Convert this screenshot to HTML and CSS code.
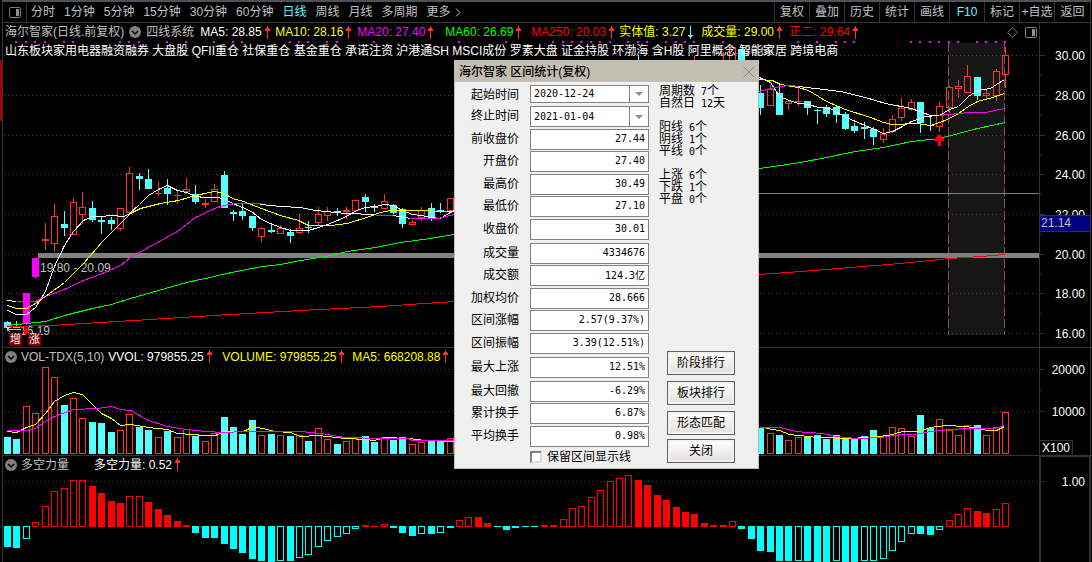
FILE: index.html
```html
<!DOCTYPE html>
<html lang="zh-CN">
<head>
<meta charset="utf-8">
<title>海尔智家 区间统计</title>
<link rel="stylesheet" href="styles.css">
</head>
<body>
<svg class="defs" aria-hidden="true">
  <symbol id="up" viewBox="0 0 7 13"><path d="M3 0H4V2H5V3H6V5H4V13H3V5H1V3H2V2H3Z"/></symbol>
  <symbol id="down" viewBox="0 0 7 13"><path d="M3 0H4V9H6V10H5V11H4V13H3V11H2V10H1V9H3Z"/></symbol>
  <symbol id="fold" viewBox="0 0 12 12"><circle cx="6" cy="6" r="6" fill="#808080"/><path d="M3 5L6 8L9 5" fill="none" stroke="#000" stroke-width="1.5"/></symbol>
  <symbol id="pane" viewBox="0 0 12 11"><rect x=".5" y=".5" width="11" height="10" rx="1" fill="none" stroke="#808080"/><rect x="7" y="2" width="3" height="7" fill="#909090"/></symbol>
</svg>
<div class="app">
  <nav class="toolbar">
    <button class="pane-btn" aria-label="侧栏"><svg class="pane"><use href="#pane"/></svg></button>
    <div class="periods">
      <button>分时</button><button>1分钟</button><button>5分钟</button><button>15分钟</button><button>30分钟</button><button>60分钟</button><button class="active">日线</button><button>周线</button><button>月线</button><button>多周期</button><button class="more">更多<svg class="chev" viewBox="0 0 6 9"><path d="M1 0.5L5 4.5L1 8.5"/></svg></button>
    </div>
    <div class="tools">
      <button>复权</button><button>叠加</button><button>历史</button><button>统计</button><button>画线</button><button class="active">F10</button><button>标记</button><button>+自选</button><button>返回</button>
    </div>
  </nav>

  <section class="panel">
    <svg class="plot" id="price" viewBox="3 23 1036 324" preserveAspectRatio="none"></svg>
    <div class="overlay">
      <div class="legend">
        <span class="name">海尔智家(日线.前复权)</span><svg class="fold"><use href="#fold"/></svg><span class="name">四线系统</span>
        <div class="averages">
          <span class="white">MA5: 28.85<svg class="arrow"><use href="#up"/></svg></span>
          <span class="yellow">MA10: 28.16<svg class="arrow"><use href="#up"/></svg></span>
          <span class="magenta">MA20: 27.40<svg class="arrow"><use href="#up"/></svg></span>
          <span class="green">MA60: 26.69<svg class="arrow"><use href="#up"/></svg></span>
          <span class="red">MA250: 20.03<svg class="arrow"><use href="#up"/></svg></span>
          <span class="yellow">实体值: 3.27<svg class="arrow fall"><use href="#down"/></svg></span>
          <span class="yellow">成交量: 29.00<svg class="arrow"><use href="#up"/></svg></span>
          <span class="red">正二: 29.64<svg class="arrow"><use href="#up"/></svg></span>
        </div>
        <div class="corner"><svg class="diamond" viewBox="0 0 11 11"><path d="M5.5 .7L10.3 5.5L5.5 10.3L.7 5.5Z"/></svg><svg class="pane"><use href="#pane"/></svg></div>
      </div>
      <p class="tags">山东板块家用电器融资融券 大盘股 QFII重仓 社保重仓 基金重仓 承诺注资 沪港通SH MSCI成份 罗素大盘 证金持股 环渤海 含H股 阿里概念 智能家居 跨境电商</p>
    </div>
    <svg class="axis" id="price-axis" viewBox="1039 23 53 324" preserveAspectRatio="none"></svg>
  </section>

  <section class="panel">
    <svg class="plot" id="volume" viewBox="3 348 1036 107" preserveAspectRatio="none"></svg>
    <div class="overlay">
      <div class="legend">
        <svg class="fold"><use href="#fold"/></svg><span class="name">VOL-TDX(5,10)</span>
        <div class="volumes">
          <span class="white">VVOL: 979855.25<svg class="arrow"><use href="#up"/></svg></span>
          <span class="yellow">VOLUME: 979855.25<svg class="arrow"><use href="#up"/></svg></span>
          <span class="yellow">MA5: 668208.88<svg class="arrow"><use href="#up"/></svg></span>
        </div>
      </div>
    </div>
    <svg class="axis" id="volume-axis" viewBox="1039 348 53 107" preserveAspectRatio="none"></svg>
  </section>

  <section class="panel">
    <svg class="plot" id="power" viewBox="3 456 1036 106" preserveAspectRatio="none"></svg>
    <div class="overlay">
      <div class="legend">
        <svg class="fold"><use href="#fold"/></svg><span class="name power-name">多空力量</span>
        <span class="white">多空力量: 0.52<svg class="arrow"><use href="#up"/></svg></span>
      </div>
    </div>
    <svg class="axis" id="power-axis" viewBox="1039 456 53 106" preserveAspectRatio="none"></svg>
  </section>

  <div class="dialog" role="dialog" aria-labelledby="dlg-title">
    <header class="dialog-head">
      <h1 id="dlg-title">海尔智家 区间统计(复权)</h1>
      <button class="close" aria-label="关闭窗口"><svg viewBox="0 0 12 12"><path d="M.5 .5L11.5 11.5M11.5 .5L.5 11.5"/></svg></button>
    </header>
    <div class="dialog-body">
      <form class="fields">
        <label for="f1">起始时间</label><span class="pick first"><select id="f1"><option>2020-12-24</option></select></span>
        <label for="f2">终止时间</label><span class="pick"><select id="f2"><option>2021-01-04</option></select></span>
        <label for="f3">前收盘价</label><input id="f3" value="27.44" readonly>
        <label for="f4">开盘价</label><input id="f4" value="27.40" readonly>
        <label for="f5">最高价</label><input id="f5" value="30.49" readonly>
        <label for="f6">最低价</label><input id="f6" value="27.10" readonly>
        <label for="f7">收盘价</label><input id="f7" value="30.01" readonly>
        <label for="f8">成交量</label><input id="f8" value="4334676" readonly>
        <label for="f9">成交额</label><input id="f9" value="124.3亿" readonly>
        <label for="f10">加权均价</label><input id="f10" value="28.666" readonly>
        <label for="f11">区间涨幅</label><input id="f11" value="2.57(9.37%)" readonly>
        <label for="f12">区间振幅</label><input id="f12" value="3.39(12.51%)" readonly>
        <label for="f13">最大上涨</label><input id="f13" value="12.51%" readonly>
        <label for="f14">最大回撤</label><input id="f14" value="-6.29%" readonly>
        <label for="f15">累计换手</label><input id="f15" value="6.87%" readonly>
        <label for="f16">平均换手</label><input id="f16" value="0.98%" readonly>
        <label class="keep"><input type="checkbox">保留区间显示线</label>
      </form>
      <div class="side">
        <div class="stats">
          <p>周期数<b> 7</b>个<br>自然日<b> 12</b>天</p>
          <p>阳线<b> 6</b>个<br>阴线<b> 1</b>个<br>平线<b> 0</b>个</p>
          <p>上涨<b> 6</b>个<br>下跌<b> 1</b>个<br>平盘<b> 0</b>个</p>
        </div>
        <div class="actions">
          <button>阶段排行</button><button>板块排行</button><button>形态匹配</button><button>关闭</button>
        </div>
      </div>
    </div>
  </div>
</div>
<script src="chart.js"></script>
</body>
</html>
```
FILE: styles.css
```css
* { box-sizing: border-box; }

body {
  margin: 0;
  background: #000;
  color: #c0c0c0;
  font: 12px/16px "Liberation Sans", "Noto Sans CJK SC", sans-serif;
}

.defs { position: absolute; width: 0; height: 0; }

button { font: inherit; color: inherit; background: none; border: 0; padding: 0; white-space: nowrap; }

.app {
  position: relative;
  display: grid;
  grid-template-rows: 23px minmax(0, 325fr) minmax(0, 108fr) minmax(0, 106fr);
  height: 100vh;
  min-width: 960px;
  padding-left: 2px;
  overflow: hidden;
  background: linear-gradient(#a00000, #a00000) 0 60px / 2px 61px no-repeat #000;
}

.toolbar {
  display: flex;
  border-top: 2px solid #4c5258;
  border-bottom: 1px solid #383838;
  border-left: 1px solid #333;
  margin-right: 1px;
}
.pane { width: 12px; height: 11px; }
.pane-btn { display: flex; align-items: center; justify-content: center; width: 24px; border-right: 1px solid #333; }
.periods { display: flex; align-items: center; gap: 9px; padding-left: 4px; }
.periods .more { display: flex; align-items: center; gap: 4px; }
.chev { width: 6px; height: 9px; fill: none; stroke: #c0c0c0; }
.tools { display: flex; margin-left: auto; }
.tools button { width: 35px; border-left: 1px solid #333; }
.tools button:last-child { width: 37px; border-right: 1px solid #333; }
.toolbar .active { color: #54ffff; }

.panel {
  display: grid;
  grid-template-columns: minmax(0, 1fr) 53px;
  grid-template-rows: minmax(0, 1fr);
  border-left: 1px solid #333;
  border-bottom: 1px solid #333;
}
.panel:nth-of-type(3) { border-bottom: 0; }
.plot, .axis { display: block; width: 100%; height: 100%; font-size: 12px; shape-rendering: crispEdges; }
.plot, .overlay { grid-area: 1 / 1; }
.axis { grid-area: 1 / 2; }
.overlay { z-index: 1; min-width: 0; white-space: nowrap; }

.legend { display: flex; align-items: center; height: 18px; padding-left: 2px; }
.legend span { display: flex; align-items: center; }
.fold { width: 12px; height: 12px; margin: 0 5px; flex: none; }
.panel + .panel .fold { margin: 0 4px 0 0; }
.panel + .panel .legend { height: 17px; }
.arrow { width: 7px; height: 13px; margin-left: 2px; fill: #ff3232; shape-rendering: crispEdges; }
.fall { fill: #54ffff; }
.averages { display: grid; grid-template-columns: 75px 82px 88px 86px 88px 82px 88px 80px; margin-left: 6px; }
.volumes { display: grid; grid-template-columns: 114px 130px 100px; margin-left: 4px; }
.power-name { width: 73px; }
.corner { display: flex; align-items: center; gap: 7px; margin-left: auto; padding-right: 2px; }
.diamond { width: 11px; height: 11px; fill: none; stroke: #808080; }
.tags { margin: 2px 0 0 2px; color: #fff; }

.white { color: #fff; }
.yellow { color: #ff0; }
.magenta { color: #f0f; }
.green { color: #0f0; }
.red { color: #f00; }

.dialog {
  position: absolute;
  left: 454px;
  top: 60px;
  z-index: 2;
  width: 305px;
  border: 1px solid #c3beb2;
  background: #f0f0f0;
  color: #000;
}
.dialog-head { display: flex; align-items: center; justify-content: space-between; height: 21px; padding: 0 3px 0 4px; background: #c3beb2; }
.dialog-head h1 { margin: 0; font-size: 12px; font-weight: 500; }
.close svg { display: block; width: 12px; height: 12px; fill: none; stroke: #8a8a8a; }

.dialog-body { display: flex; gap: 10px; padding: 3px 0 5px; }
.fields {
  display: grid;
  grid-template-columns: 64px 119px;
  grid-template-rows: 21px 23px 22px 23px 22px 23px 24px 22px 23px 22px 23px 24px 24px 22px 23px 24px 14px;
  column-gap: 11px;
  align-items: start;
  height: 378px;
}
.fields label { text-align: right; line-height: 18px; }
.fields label:not(.keep) { padding-top: 1px; }
.fields > input, .pick, .fields select {
  width: 100%;
  height: 21px;
  font: 10px/12px "DejaVu Sans Mono", "Noto Sans CJK SC", monospace;
  color: #000;
}
.fields > input { margin: 0; padding: 0 3px 2px; border: 1px solid #828282; background: #fff; text-align: right; }
.pick { position: relative; display: block; border: 1px solid #828282; background: #fff; }
.pick.first { height: 18px; }
.fields select { display: block; height: 100%; margin: 0; padding: 0 20px 0 3px; border: 0; background: none; appearance: none; }
.pick::after {
  content: "";
  position: absolute;
  inset: 0 0 0 auto;
  width: 18px;
  border-left: 1px solid #828282;
  pointer-events: none;
}
.pick::before {
  content: "";
  position: absolute;
  right: 5px;
  top: 50%;
  margin-top: -2px;
  border: 4px solid transparent;
  border-top-color: #8c8c8c;
  border-bottom-width: 0;
  pointer-events: none;
}
.fields .keep { grid-column: 2; display: flex; align-items: center; gap: 5px; line-height: 14px; white-space: nowrap; }
.keep input {
  appearance: none;
  width: 12px;
  height: 12px;
  margin: 0;
  border: 2px solid;
  border-color: #808080 #dcdcdc #dcdcdc #808080;
  background: #fff;
}

.side { display: flex; flex-direction: column; justify-content: space-between; }
.stats p { margin: 0 0 12px; line-height: 12px; }
.stats b { font: 10px/1px "DejaVu Sans Mono", monospace; white-space: pre; }
.actions { display: grid; grid-template-rows: 30px 30px 28px 24px; margin-left: 8px; }
.actions button {
  width: 68px;
  height: 24px;
  border: 1px solid #606060;
  background: linear-gradient(#fff, #e2e0dc);
  box-shadow: inset 0 0 0 2px #f4f2ee;
}
```
FILE: chart.js
```js
const NS = "http://www.w3.org/2000/svg";
const RED = "#ff3232", CYAN = "#54ffff", GRID = "#333";
const slot = i => Math.floor(7.55 + 9.415 * i);

function add(parent, tag, attrs, text) {
  const el = document.createElementNS(NS, tag);
  for (const k in attrs) el.setAttribute(k, attrs[k]);
  if (text) el.textContent = text;
  parent.appendChild(el);
}
function fill(p, x, y, w, h, color) { add(p, "rect", { x, y, width: w, height: h, fill: color }); }
function box(p, x, y, w, h, color, inside = "none") {
  add(p, "rect", { x: x + 0.5, y: y + 0.5, width: w - 1, height: h - 1, fill: inside, stroke: color });
}
function line(p, points, color) { add(p, "polyline", { points, fill: "none", stroke: color, "stroke-width": 1, transform: "translate(.5 .5)" }); }
function label(p, x, y, text, color = "#fff", anchor = "end") { add(p, "text", { x, y, fill: color, "text-anchor": anchor }, text); }
function dotted(p, y) { add(p, "path", { d: `M4 ${y + 0.5}H1038`, stroke: "#444", "stroke-dasharray": "1 3" }); }

/* Candles: index, kind (h hollow, c falling, r flat, m limit), high, open/close top, bottom, low */
const candles = `0 c 321 322 328 331|1 c 321 327 328 328|2 m 293 293 323 325|3 m 258 258 277 279|4 r 223 239 241 250
5 h 204 216 244 252|6 c 211 224 228 236|7 h 198 202 235 235|8 h 192 207 215 224|9 c 201 208 220 222|10 c 217 220 222 234
11 c 217 220 224 230|12 h 208 208 229 231|13 h 167 173 213 213|14 c 173 176 179 190|15 c 169 179 189 189|16 r 182 193 194 196
17 c 179 188 194 205|18 r 190 195 196 204|19 h 178 189 192 194|20 c 185 194 202 204|21 r 199 203 205 208|22 h 184 189 202 202
23 c 171 175 208 208|24 c 210 212 214 221|25 c 203 211 216 220|26 c 216 216 228 231|27 h 227 228 237 242|28 c 223 230 232 233
29 h 225 228 234 234|30 c 229 232 236 243|31 h 214 228 233 234|32 c 221 227 228 233|33 h 207 214 223 225|34 h 207 211 216 221
35 c 208 211 212 216|36 r 207 210 212 219|37 h 200 200 211 212|38 c 194 197 202 212|39 c 204 206 208 212|40 h 194 201 209 209
41 c 204 205 213 214|42 c 208 209 224 228|43 h 220 222 225 226|44 h 207 210 218 221|45 c 203 208 218 221|46 c 203 210 212 213
47 h 198 198 211 211|67 c 55 62 70 74|73 r 56 62 70 74|76 r 52 62 70 74|77 h 45 47 80 84|78 c 49 49 80 84
80 c 85 93 108 115|81 h 85 89 106 106|82 c 85 93 115 115|83 h 101 101 104 110|84 r 86 101 102 106|85 c 101 101 108 115
86 c 109 110 111 124|87 c 105 107 114 117|88 c 105 107 115 123|89 c 112 114 129 130|90 c 123 126 131 133|91 c 122 127 129 139
92 c 127 129 137 145|93 h 128 134 140 143|94 h 115 119 132 133|95 h 98 108 118 121|96 h 99 102 110 111|97 c 102 102 123 133
98 c 115 125 126 131|99 h 102 106 127 132|100 h 86 87 108 113|101 h 80 86 89 98|102 h 65 76 93 93|103 c 77 77 96 100
104 h 89 93 96 100|105 h 69 71 96 101|106 h 47 55 75 88`.split(/[|\n]/).map(r => r.split(" "));

const price = document.getElementById("price");
fill(price, 948, 43, 57, 292, "#161616");
[55, 95, 135, 174, 214, 254, 293, 333].forEach(y => dotted(price, y));
[948, 1004].forEach(x => add(price, "path", { d: `M${x + 0.5} 43V335`, stroke: "#805a46", "stroke-dasharray": "9 3" }));
[1,2,3,4,6,7,12,13,14,17,19,22,24,25,30,31,32,34,35,39,48,53,58,59,60,61,62,63,64,66,67,68,70,71,72,73,76,84,86,88,89,90,96,97,98,99,100,101,103,104,105,106]
  .forEach(i => fill(price, slot(i) - 1, 41, 2, 2, "#f0f"));
fill(price, 38, 253, 1001, 5, "#808080");
fill(price, 454, 193, 585, 1, "#808080");
label(price, 40, 272, "19.80 - 20.09", "#c0c0c0", "start");
label(price, 20, 335, "16.19", "#c0c0c0", "start");
label(price, 732, 55, "←30.68", "#909090", "start");
line(price, "20,329 7,329 10,326 7,329 10,332", "#c0c0c0");

for (const [i, kind, hi, top, bot, lo] of candles) {
  const x = slot(+i), t = +top, b = +bot, color = kind === "c" ? CYAN : RED;
  if (kind === "h") {
    if (t > hi) fill(price, x, +hi, 1, t - hi, color);
    if (lo > b) fill(price, x, b, 1, lo - b, color);
    box(price, x - 3, t, 7, b - t, color);
  } else {
    fill(price, x, +hi, 1, lo - hi, color);
    fill(price, x - 3, t, 7, b - t, kind === "m" ? "#f0f" : color);
  }
}
line(price, "7,310 16,314 26,314 35,307 45,291 54,266 64,245 73,231 83,220 92,216 101,216 111,215 124,216 129,213 139,204 148,195 158,189 167,185 177,190 186,192 195,196 205,197 214,197 224,198 230,202 242,207 251,211 261,219 270,223 280,227 290,230 308,230 318,227 327,224 337,220 346,216 356,210 365,207 375,206 384,204 393,205 402,210 412,214 421,215 430,217 440,218 450,212 454,210", "#fff");
line(price, "7,300 16,301", "#fff");
line(price, "16,301 35,301 45,296 64,289 83,280 102,273 120,265 130,257 148,247 177,231 195,217 214,208 224,205 235,203 260,203", "#f0f");
line(price, "260,204 280,206 300,207 315,210 345,213 375,214", "#fff");
line(price, "375,215 393,215", "#f0f");
line(price, "393,215 410,218", "#fff");
line(price, "410,218 437,218 454,214", "#f0f");
line(price, "7,305 16,308 26,308 35,303 45,296 64,282 83,263 102,241 120,223 130,213 140,208 160,203 178,200 195,195 214,191 224,193 232,198 243,201 261,208 280,215 298,220 308,225 330,225 347,223 366,217 380,212 390,210 427,210 435,211 454,211", "#ff0");
line(price, "7,325 26,323 45,321 64,315 92,308 111,304 130,298 158,290 186,282 205,278 222,274 236,271 262,266 280,264 300,260 325,256 347,251 375,247 400,242 430,238 454,234 759,168 780,165 800,162 826,157 855,151 883,147 911,141 939,138 958,133 977,128 1005,122", "#0f0");
line(price, "7,326 50,325 100,322 150,319 230,314 300,310 380,306 454,301 759,274 800,271 850,267 900,263 949,258 980,256 1005,254", "#f00");
line(price, "759,77 770,82 779,96 789,100 798,103 808,104 818,107 830,108 836,112 855,121 874,129 883,133 892,131 902,126 911,121 925,116 939,115 949,109 958,106 968,96 977,90 990,88 996,84 1004,79", "#fff");
line(price, "759,79 772,80 780,84 798,87 808,90 818,96 826,101 845,109 870,117 883,122 892,124 917,123 930,125 942,121 955,115 968,106 977,101 992,97 1004,93", "#ff0");
line(price, "759,91 770,88 780,86 790,85 798,86", "#f0f");
line(price, "798,86 840,91 865,97 885,103 911,108 930,115 939,115", "#fff");
line(price, "939,115 968,112 985,112 1004,108", "#f0f");
add(price, "path", { d: "M939.5 134L944 139V141H941V146H938V141H934V139Z", fill: "#f00" });
add(price, "path", { d: "M26 327L29 331L26 336L23 331Z", fill: "#f00" });
[["增", 9], ["涨", 28]].forEach(([t, x]) => {
  fill(price, x, 333, 13, 13, "#800000");
  label(price, x + 1, 343, t, "#fff", "start");
  price.lastChild.setAttribute("font-size", "11");
});

/* Volume bars: top edge, h rising or c falling */
const volumeLeft = "437c 439c 406h 413h 367h 377h 405c 398h 418h 422c 423c 432c 430h 414h 427c 430c 437h 431c 437h 429h 436c 441h 433h 417c 427c 434c 420c 435h 434c 435h 436c 435h 441c 428h 439h 444c 441h 438h 436c 442c 437h 440c 437c 444h 442h 440c 441c 438h".split(" ");
const volumeRight = "428c 433h 435c 440h 437h 436c 435c 439c 435c 438c 439c 436c 430c 436h 427h 428h 436h 415c 428c 419h 430h 435h 425h 425c 435h 427h 412h".split(" ");
const volume = document.getElementById("volume");
[369, 411].forEach(y => dotted(volume, y));
function volumeBars(list, first) {
  list.forEach((v, k) => {
    const y = parseInt(v), draw = v.endsWith("h") ? box : fill;
    draw(volume, slot(first + k) - 3, y, 7, 454 - y, v.endsWith("h") ? RED : CYAN);
  });
}
volumeBars(volumeLeft, 0);
volumeBars(volumeRight, 80);
line(volume, "7,431 16,432 26,427 35,424 45,413 54,401 64,395 73,392 82,394 92,404 101,413 111,418 120,425 130,424 148,427 167,429 177,433 205,435 215,435 224,431 243,431 253,426 262,428 275,431 290,432 300,436 318,435 345,438 365,439 374,440 384,437 408,438 425,440 454,441", "#ff0");
line(volume, "766,428 779,430 789,434 817,437 850,438 865,437 888,435 902,431 917,431 930,427 945,425 965,426 977,428 987,430 996,430 1004,426", "#ff0");
line(volume, "7,430 26,430 35,428 45,421 54,416 73,409 97,408 111,406 120,409 130,410 148,420 167,426 186,429 205,431 224,432 243,431 300,431 320,433 345,437 380,438 408,438 412,440 454,440", "#f0f");
line(volume, "759,427 780,427 795,431 822,433 836,436 855,438 880,437 902,434 915,434 930,431 950,429 968,428 995,428 1004,425", "#f0f");

/* Bull/bear bars: outer edge, f filled or h hollow */
const ZERO = 526;
const powerBars = ("547f 548f 539h 522h 506h 491h 488h 480h 480h 486f 493f 501f 503f 496h 496h 502f 509f 515f 521f 525f 533f 538f 538f 544f " +
  "549f 553f 559f 561f 562f 561h 561f 558h 555h 547h 541h 537h 534h 529h 525f 526f 524h 528f 533f 536f 534h 534f 533h 528f " +
  "520h 517h 517f 523f 527f 530f 528f 527f 527f 525f 525f 519h 508h 506h 497h 490h 481h 478h 475h 480f 485f 495f 500f 507f 512f 514f 523f 525f 525f 521h 529f 539f " +
  "551f 552f 561f 561f 561h 561f 562f 562f 561h 562f 562f 561h 561h 559h 551h 542h 534h 534f 535f 530h 520h 514h 508h 511f 513f 509h 503h").split(" ");
const power = document.getElementById("power");
dotted(power, 481);
powerBars.forEach((v, i) => {
  const y = parseInt(v), up = y <= ZERO, draw = v.endsWith("h") ? box : fill;
  draw(power, slot(i) - 3, up ? y : ZERO, 7, up ? ZERO + 1 - y : y - ZERO, up ? "#f00" : "#0ff");
});

/* Axes */
function axis(id, top, bottom, labels, minor) {
  const a = document.getElementById(id);
  fill(a, 1039, top, 1, bottom - top, GRID);
  fill(a, 1090, top, 1, bottom - top, GRID);
  labels.forEach(([y, t]) => { fill(a, 1040, y, 5, 1, GRID); label(a, 1085, y + 5, t); });
  minor.forEach(y => fill(a, 1040, y, 2, 1, GRID));
  return a;
}
const pa = axis("price-axis", 23, 347,
  [[55, "30.00"], [95, "28.00"], [135, "26.00"], [174, "24.00"], [214, "22.00"], [254, "20.00"], [293, "18.00"], [333, "16.00"]],
  [75, 115, 155, 194, 234, 274, 313]);
box(pa, 1039, 215, 52, 17, GRID, "#000080");
label(pa, 1041, 227, "21.14", "#c0c0c0", "start");
const va = axis("volume-axis", 348, 455, [[369, "20000"], [411, "10000"]], [390]);
box(va, 1039, 440, 34, 16, GRID);
label(va, 1042, 452, "X100", "#fff", "start");
const wa = axis("power-axis", 456, 562, [[481, "1.00"]], []);
box(wa, 1040, 456, 50, 107, GRID);
```
